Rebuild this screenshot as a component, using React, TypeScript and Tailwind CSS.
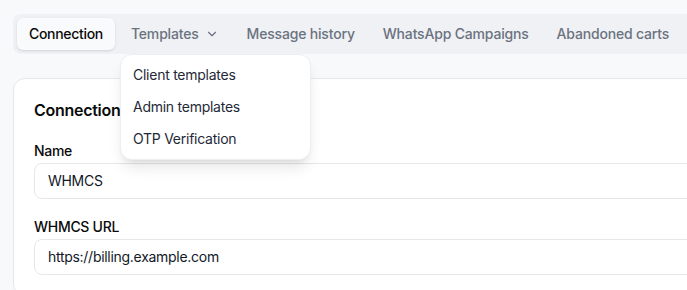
import React from 'react';
import { ChevronDown } from 'lucide-react';

const tabs = ['Connection', 'Templates', 'Message history', 'WhatsApp Campaigns', 'Abandoned carts'];
const templateItems = ['Client templates', 'Admin templates', 'OTP Verification'];

const App = () => {
  return (
    <div className="h-[290px] w-[687px] overflow-hidden bg-[#f8f9fb] font-['Inter',sans-serif] tracking-[-0.018em]">
      <div className="w-[760px] pl-[13px] pt-[14px]">
        {/* Tabs */}
        <div className="relative flex h-10 items-center gap-1 rounded-l-lg bg-[#eff1f4] p-1">
          {tabs.map((tab) => {
            const active = tab === 'Connection';
            return (
              <div
                key={tab}
                className={`relative flex h-8 items-center gap-1.5 rounded-md px-3 text-sm font-medium ${
                  active ? 'bg-[#f9fafb] tracking-[-0.022em] text-[#0a0a0a] shadow-sm' : 'tracking-[-0.013em] text-[#6b7280]'
                }`}
              >
                {tab}
                {tab === 'Templates' && <ChevronDown className="h-3.5 w-3.5" strokeWidth={2} />}
                {tab === 'Templates' && (
                  <div className="absolute left-[1px] top-[36px] z-10 w-[191px] rounded-xl border border-[#eceef1] bg-white p-1 tracking-[-0.018em] shadow-lg">
                    {templateItems.map((item) => (
                      <div key={item} className="flex h-8 items-center px-2 text-sm font-normal text-[#1f2937]">
                        {item}
                      </div>
                    ))}
                  </div>
                )}
              </div>
            );
          })}
        </div>

        {/* Connection card */}
        <div className="mt-6 rounded-l-xl border border-[#e5e7eb] bg-white p-5">
          <h2 className="-mt-px text-base font-semibold leading-6 text-[#0a0a0a]">Connection</h2>
          <div className="mt-[19px]">
            <label className="mb-0.5 block text-sm font-medium leading-5 text-[#0a0a0a]">Name</label>
            <div className="flex h-9 items-center rounded-lg border border-[#e5e7eb] px-[13px] text-sm text-[#111827]">
              WHMCS
            </div>
          </div>
          <div className="mt-[18px]">
            <label className="mb-0.5 block text-sm font-medium leading-5 text-[#0a0a0a]">WHMCS URL</label>
            <div className="flex h-9 items-center rounded-lg border border-[#e5e7eb] px-[13px] text-sm text-[#111827]">
              https://billing.example.com
            </div>
          </div>
        </div>
      </div>
    </div>
  );
};

export default App;
